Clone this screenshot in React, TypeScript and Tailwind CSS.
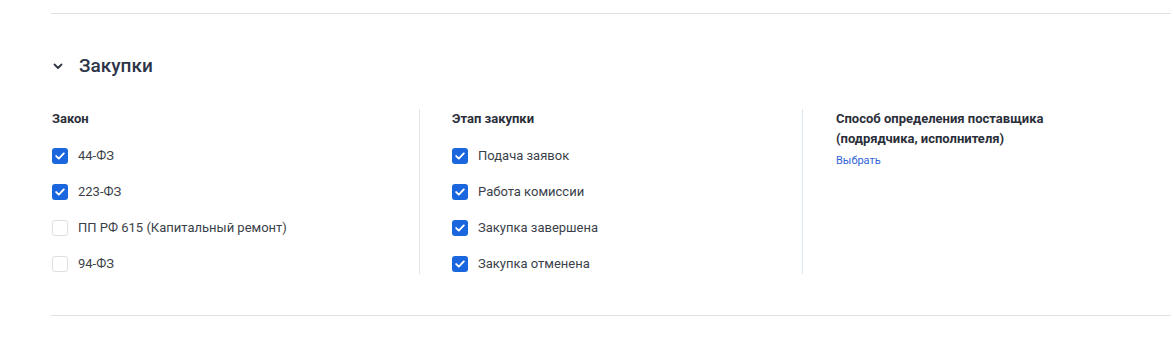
import React, { useState } from 'react';

type Item = { label: string; checked: boolean };

const Checkbox: React.FC<{ checked: boolean; onToggle: () => void }> = ({ checked, onToggle }) => (
  <button
    type="button"
    onClick={onToggle}
    className={
      checked
        ? 'flex h-4 w-4 shrink-0 items-center justify-center rounded-[3px] bg-[#1a66de]'
        : 'flex h-4 w-4 shrink-0 items-center justify-center rounded-[3px] border border-[#dcdfe4] bg-white'
    }
  >
    {checked && (
      <svg width="10" height="8" viewBox="0 0 10 8" fill="none">
        <path d="M1.2 4.1L3.8 6.6L8.8 1.4" stroke="white" strokeWidth="1.9" strokeLinecap="round" strokeLinejoin="round" />
      </svg>
    )}
  </button>
);

const CheckList: React.FC<{ initial: Item[] }> = ({ initial }) => {
  const [items, setItems] = useState(initial);
  const toggle = (i: number) =>
    setItems(items.map((it, j) => (j === i ? { ...it, checked: !it.checked } : it)));

  return (
    <div className="mt-[19px] flex flex-col gap-5">
      {items.map((it, i) => (
        <label key={it.label} className="flex h-4 items-center gap-[10px] text-[13px] leading-4 text-[#3b3f4a]">
          <Checkbox checked={it.checked} onToggle={() => toggle(i)} />
          <span>{it.label}</span>
        </label>
      ))}
    </div>
  );
};

export default function App() {
  return (
    <div className="bg-white pl-[51px] pr-[2px] pt-[13px] font-['Roboto','Liberation_Sans',sans-serif]">
      <div className="border-t border-[#dde2e8]">
        <div className="mt-[40px] flex h-6 items-center">
          <svg width="10" height="7" viewBox="0 0 10 7" fill="none" className="ml-[2px]">
            <path d="M1.5 1.5L5 5L8.5 1.5" stroke="#2f3746" strokeWidth="1.8" strokeLinecap="round" strokeLinejoin="round" />
          </svg>
          <h2 className="ml-[16px] text-[19px] font-medium leading-6 text-[#2d3548]">Закупки</h2>
        </div>

        <div className="mt-[31px] flex">
          <div className="w-[368px] pl-[1px]">
            <h3 className="h-5 text-[13px] font-bold leading-5 text-[#2b2f3a]">Закон</h3>
            <CheckList
              initial={[
                { label: '44-ФЗ', checked: true },
                { label: '223-ФЗ', checked: true },
                { label: 'ПП РФ 615 (Капитальный ремонт)', checked: false },
                { label: '94-ФЗ', checked: false },
              ]}
            />
          </div>

          <div className="w-[383px] border-l border-[#e1e6ec] pb-[2px] pl-[32px]">
            <h3 className="h-5 text-[13px] font-bold leading-5 text-[#2b2f3a]">Этап закупки</h3>
            <CheckList
              initial={[
                { label: 'Подача заявок', checked: true },
                { label: 'Работа комиссии', checked: true },
                { label: 'Закупка завершена', checked: true },
                { label: 'Закупка отменена', checked: true },
              ]}
            />
          </div>

          <div className="border-l border-[#dce6f2] pl-[33px]">
            <h3 className="text-[13px] font-bold leading-5 text-[#2b2f3a]">
              Способ определения поставщика
              <br />
              (подрядчика, исполнителя)
            </h3>
            <a href="#" className="mt-[5px] block text-[11px] leading-[14px] text-[#3163d8]">
              Выбрать
            </a>
          </div>
        </div>

        <div className="mt-[41px] border-t border-[#dde2e8]" />
      </div>
    </div>
  );
}
